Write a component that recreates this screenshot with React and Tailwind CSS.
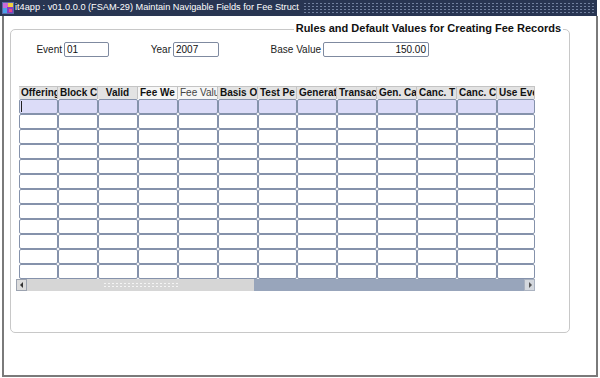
import React from "react";

const cols = [
  { t: "Offering", w: "w-[39px]" },
  { t: "Block C", w: "w-[40px]" },
  { t: "Valid", w: "w-[40px]", center: true },
  { t: "Fee We", w: "w-[40px]", light: true },
  { t: "Fee Valu", w: "w-[40px]", light: true, normal: true },
  { t: "Basis O", w: "w-[40px]" },
  { t: "Test Pe", w: "w-[39px]" },
  { t: "Generat", w: "w-[40px]" },
  { t: "Transac", w: "w-[40px]" },
  { t: "Gen. Ca", w: "w-[40px]" },
  { t: "Canc. T", w: "w-[40px]" },
  { t: "Canc. C", w: "w-[40px]" },
  { t: "Use Eve", w: "w-[38px]" },
];

const rows = Array.from({ length: 12 }, (_, i) => i);

function AppIcon() {
  return (
    <svg viewBox="0 0 12 12" className="ml-[2px] h-[12px] w-[12px] shrink-0">
      <rect x="0" y="0" width="12" height="12" fill="#5a6aa8" />
      <rect x="1" y="1" width="5" height="5" fill="#c86ad8" />
      <rect x="6" y="1" width="5" height="4" fill="#f0d040" />
      <rect x="1" y="6" width="4" height="5" fill="#4aa0e8" />
      <rect x="5" y="5" width="6" height="6" fill="#8a3cc0" />
      <rect x="7" y="7" width="3" height="3" fill="#e84a8a" />
    </svg>
  );
}

function Field({ value, w, right }) {
  return (
    <div
      className={`${w} h-[15px] rounded-[2px] border border-[#7f8aa0] bg-white px-[2px] text-[10px] leading-[13px] text-[#111] ${
        right ? "text-right" : "text-left"
      }`}
    >
      {value}
    </div>
  );
}

export default function App() {
  return (
    <div className="h-[378px] w-[600px] overflow-hidden bg-white font-['Liberation_Sans',Arial,sans-serif]">
      {/* Title bar */}
      <div className="flex h-[16px] w-[597px] items-center bg-[#283552]">
        <AppIcon />
        <span className="ml-[1px] whitespace-nowrap text-[9.2px] leading-none text-white">
          it4app : v01.0.0.0 (FSAM-29) Maintain Navigable Fields for Fee Struct
        </span>
        <div className="ml-[4px] mr-[1px] h-[12px] flex-1 bg-[radial-gradient(circle,#71809e_0.8px,transparent_1px)] bg-[length:4px_3px]" />
      </div>

      {/* Window body */}
      <div className="ml-[2px] h-[361px] w-[596px] border-x-2 border-b-2 border-[#7a7a7a] pl-[6px] pt-[13px]">
        <div className="relative h-[304px] w-[560px] rounded-[5px] border border-[#c8c8c8]">
          <div className="absolute right-[6px] top-[-9px] bg-white px-[2px] text-[11px] font-bold leading-[14px] text-[#111]">
            Rules and Default Values for Creating Fee Records
          </div>

          {/* Fields row */}
          <div className="mt-[12px] flex h-[15px] items-center text-[10px] text-[#222]">
            <div className="w-[51px] text-right">Event</div>
            <div className="ml-[2px]">
              <Field value="01" w="w-[45px]" />
            </div>
            <div className="w-[62px] text-right">Year</div>
            <div className="ml-[2px]">
              <Field value="2007" w="w-[46px]" />
            </div>
            <div className="w-[102px] text-right">Base Value</div>
            <div className="ml-[2px]">
              <Field value="150.00" w="w-[106px]" right />
            </div>
          </div>

          {/* Grid */}
          <div className="ml-[5px] mt-[29px] w-[519px]">
            <div className="ml-[3px] flex h-[13px]">
              {cols.map((c, i) => (
                <div
                  key={i}
                  className={`${c.w} h-[13px] overflow-hidden whitespace-nowrap border-r border-t border-[#c4c4c4] px-[2px] text-[10px] leading-[12px] ${
                    c.light ? "bg-[#f6f6f6]" : "bg-[#e3e3e3]"
                  } ${c.normal ? "font-normal text-[#444]" : "font-bold text-[#111]"} ${
                    c.center ? "text-center" : "text-left"
                  }`}
                >
                  {c.t}
                </div>
              ))}
            </div>
            {rows.map((r) => (
              <div key={r} className="ml-[3px] flex h-[15px]">
                {cols.map((c, i) => (
                  <div
                    key={i}
                    className={`${c.w} flex h-[15px] items-center rounded-[2px] border border-[#8592ab] ${
                      r === 0 ? "bg-[#dcdcf8]" : "bg-white"
                    }`}
                  >
                    {r === 0 && i === 0 ? (
                      <div className="ml-[1px] h-[11px] w-px bg-[#222]" />
                    ) : null}
                  </div>
                ))}
              </div>
            ))}
            {/* Scrollbar */}
            <div className="flex h-[12px] w-[519px]">
              <div className="flex h-[12px] w-[11px] items-center justify-center border border-[#9ca3b0] bg-[#dcdcdc]">
                <svg viewBox="0 0 4 6" className="h-[6px] w-[4px]">
                  <polygon points="3,0 0,3 3,6" fill="#333" />
                </svg>
              </div>
              <div className="flex h-[12px] w-[227px] items-center justify-center bg-[#d6d6d6]">
                <div className="h-[6px] w-[75px] bg-[radial-gradient(circle,#f4f4f4_0.8px,transparent_1px)] bg-[length:4px_3px]" />
              </div>
              <div className="h-[12px] flex-1 bg-[#98a5bb]" />
              <div className="flex h-[12px] w-[11px] items-center justify-center border border-[#aab2c0] bg-[#d4d8de]">
                <svg viewBox="0 0 4 6" className="h-[6px] w-[4px]">
                  <polygon points="1,0 4,3 1,6" fill="#555" />
                </svg>
              </div>
            </div>
          </div>
        </div>
      </div>
    </div>
  );
}
